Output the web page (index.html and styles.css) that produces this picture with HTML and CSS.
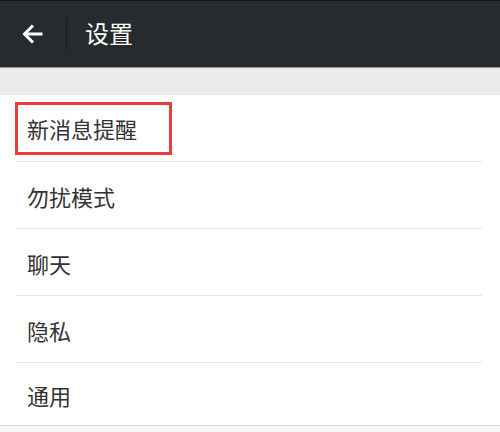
FILE: index.html
```html
<!DOCTYPE html>
<html lang="zh-CN">
<head>
<meta charset="utf-8">
<title>设置</title>
<link rel="stylesheet" href="styles.css">
</head>
<body>
<div class="page">
  <header class="topbar">
    <span class="back">
      <svg width="22" height="22" viewBox="0 0 22 22" aria-hidden="true">
        <path d="M20.5 11H3M11 2.5L2.5 11L11 19.5" fill="none" stroke="#ffffff" stroke-width="3" stroke-linecap="butt" stroke-linejoin="miter"/>
      </svg>
    </span>
    <span class="divider"></span>
    <h1 class="title">设置</h1>
  </header>
  <div class="band"></div>
  <ul class="list">
    <li class="row"><span class="label highlight">新消息提醒</span></li>
    <li class="row"><span class="label">勿扰模式</span></li>
    <li class="row"><span class="label">聊天</span></li>
    <li class="row"><span class="label">隐私</span></li>
    <li class="row last"><span class="label">通用</span></li>
  </ul>
  <div class="footer"></div>
</div>
</body>
</html>
```

FILE: styles.css
```css
html, body {
  margin: 0;
  padding: 0;
  background: #ffffff;
}
body {
  font-family: "Noto Sans CJK SC", "Noto Sans", sans-serif;
  width: 500px;
  height: 432px;
  overflow: hidden;
}
.page {
  display: flex;
  flex-direction: column;
  height: 432px;
}
.topbar {
  background: #252b2e;
  border-top: 1px solid #15191b;
  border-bottom: 1px solid #8f979a;
  box-sizing: border-box;
  height: 68px;
  display: flex;
  align-items: center;
  flex-shrink: 0;
}
.back {
  width: 22px;
  height: 22px;
  margin-left: 22px;
  display: flex;
}
.divider {
  width: 1px;
  height: 34px;
  background: #171c1e;
  margin-left: 22px;
}
.title {
  margin: 0 0 0 18px;
  font-size: 24px;
  font-weight: 400;
  color: #ffffff;
  line-height: 1;
  position: relative;
  top: -1px;
}
.band {
  height: 27px;
  background: #ebebeb;
  flex-shrink: 0;
}
.list {
  list-style: none;
  margin: 0;
  padding: 0 18px 0 16px;
}
.row {
  height: 66px;
  border-bottom: 1px solid #e6e6e6;
  display: flex;
  align-items: center;
}
.row.last {
  border-bottom: none;
  height: 62px;
}
.label {
  font-size: 22px;
  color: #333333;
  line-height: 1;
  padding-left: 11px;
  position: relative;
  top: 1px;
}
.label.highlight {
  border: 3px solid #ef3a3a;
  margin-left: -1px;
  padding: 12px 32px 13px 9px;
  top: 0;
}
.footer {
  flex: 1;
  background: #f7f7f7;
  border-top: 1px solid #dcdcdc;
}
```
